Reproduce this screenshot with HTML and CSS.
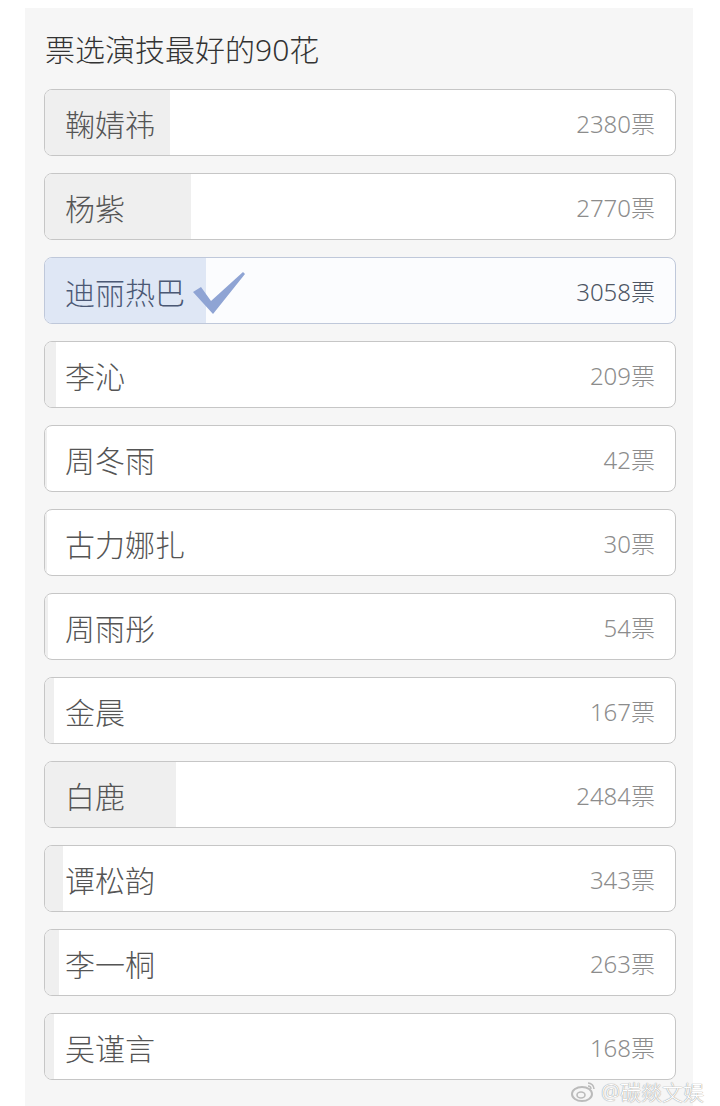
FILE: index.html
```html
<!DOCTYPE html>
<html lang="zh">
<head>
  <meta charset="UTF-8" />
  <meta name="viewport" content="width=device-width, initial-scale=1.0"/>
  <title>票选演技最好的90花</title>
  <link rel="stylesheet" href="styles.css">
</head>
<body>
  <div class="panel">
    <h2 class="title">票选演技最好的90花</h2>

    <div class="options">
      <div class="option">
        <div class="fill" style="width: 19.9%"></div>
        <span class="name">鞠婧祎</span>
        <span class="count">2380票</span>
      </div>
      <div class="option">
        <div class="fill" style="width: 23.1%"></div>
        <span class="name">杨紫</span>
        <span class="count">2770票</span>
      </div>
      <div class="option selected">
        <div class="fill" style="width: 25.6%"></div>
        <span class="name">迪丽热巴</span>
        <svg class="check" width="56" height="46" viewBox="0 0 56 46">
          <path d="M2 22 L10 17 L20 31 L52 2 L54 4 L22 44 Z" fill="#8fa4d4"/>
        </svg>
        <span class="count">3058票</span>
      </div>
      <div class="option">
        <div class="fill" style="width: 1.75%"></div>
        <span class="name">李沁</span>
        <span class="count">209票</span>
      </div>
      <div class="option">
        <div class="fill" style="width: 0.35%"></div>
        <span class="name">周冬雨</span>
        <span class="count">42票</span>
      </div>
      <div class="option">
        <div class="fill" style="width: 0.25%"></div>
        <span class="name">古力娜扎</span>
        <span class="count">30票</span>
      </div>
      <div class="option">
        <div class="fill" style="width: 0.45%"></div>
        <span class="name">周雨彤</span>
        <span class="count">54票</span>
      </div>
      <div class="option">
        <div class="fill" style="width: 1.4%"></div>
        <span class="name">金晨</span>
        <span class="count">167票</span>
      </div>
      <div class="option">
        <div class="fill" style="width: 20.75%"></div>
        <span class="name">白鹿</span>
        <span class="count">2484票</span>
      </div>
      <div class="option">
        <div class="fill" style="width: 2.87%"></div>
        <span class="name">谭松韵</span>
        <span class="count">343票</span>
      </div>
      <div class="option">
        <div class="fill" style="width: 2.2%"></div>
        <span class="name">李一桐</span>
        <span class="count">263票</span>
      </div>
      <div class="option">
        <div class="fill" style="width: 1.4%"></div>
        <span class="name">吴谨言</span>
        <span class="count">168票</span>
      </div>
    </div>
  </div>

  <!-- 水印 -->
  <div class="watermark">
    <svg width="26" height="22" viewBox="0 0 26 22">
      <ellipse cx="11" cy="14" rx="10" ry="7" fill="none" stroke="#bbb" stroke-width="2"/>
      <ellipse cx="10" cy="15" rx="4" ry="3" fill="none" stroke="#bbb" stroke-width="1.6"/>
      <path d="M17 3 A6 6 0 0 1 23 9" fill="none" stroke="#bbb" stroke-width="1.6"/>
      <path d="M17 6 A3 3 0 0 1 20 9" fill="none" stroke="#bbb" stroke-width="1.4"/>
    </svg>
    <span>@碳燚文娱</span>
  </div>
</body>
</html>
```

FILE: styles.css
```css
body {
  margin: 0;
  background: #ffffff;
  font-family: "Noto Sans", "Noto Sans CJK SC", sans-serif;
  font-weight: 300;
  position: relative;
}
.panel {
  margin: 8px 0 0 25px;
  width: 668px;
  min-height: 1098px;
  background: #f6f6f6;
  padding: 22px 0 0 19px;
  box-sizing: border-box;
}
.title {
  margin: 0 0 19px 1px;
  font-size: 30px;
  line-height: 40px;
  font-weight: 300;
  color: #333;
}
.options {
  display: flex;
  flex-direction: column;
  gap: 17px;
  width: 632px;
}
.option {
  position: relative;
  height: 67px;
  box-sizing: border-box;
  border: 1px solid #c6c6c6;
  border-radius: 8px;
  background: #fff;
  overflow: hidden;
  display: flex;
  align-items: center;
  padding: 0 20px;
}
.fill {
  position: absolute;
  left: 0;
  top: 0;
  bottom: 0;
  background: #efefef;
}
.name {
  position: relative;
  font-size: 30px;
  color: #555;
}
.count {
  position: relative;
  margin-left: auto;
  font-size: 24px;
  color: #8c8c8c;
}
.selected {
  border-color: #bfc8da;
  background: #fbfcfe;
}
.selected .fill {
  background: #dfe7f5;
}
.selected .name {
  color: #4b5874;
}
.selected .count {
  color: #4c5563;
}
.check {
  position: relative;
  margin: 4px 0 0 6px;
}
.watermark {
  position: absolute;
  right: 16px;
  top: 1076px;
  display: flex;
  align-items: center;
  gap: 4px;
  font-size: 21px;
  color: #fff;
  text-shadow: 0 0 1px #999, 0 0 1px #999;
}
```
